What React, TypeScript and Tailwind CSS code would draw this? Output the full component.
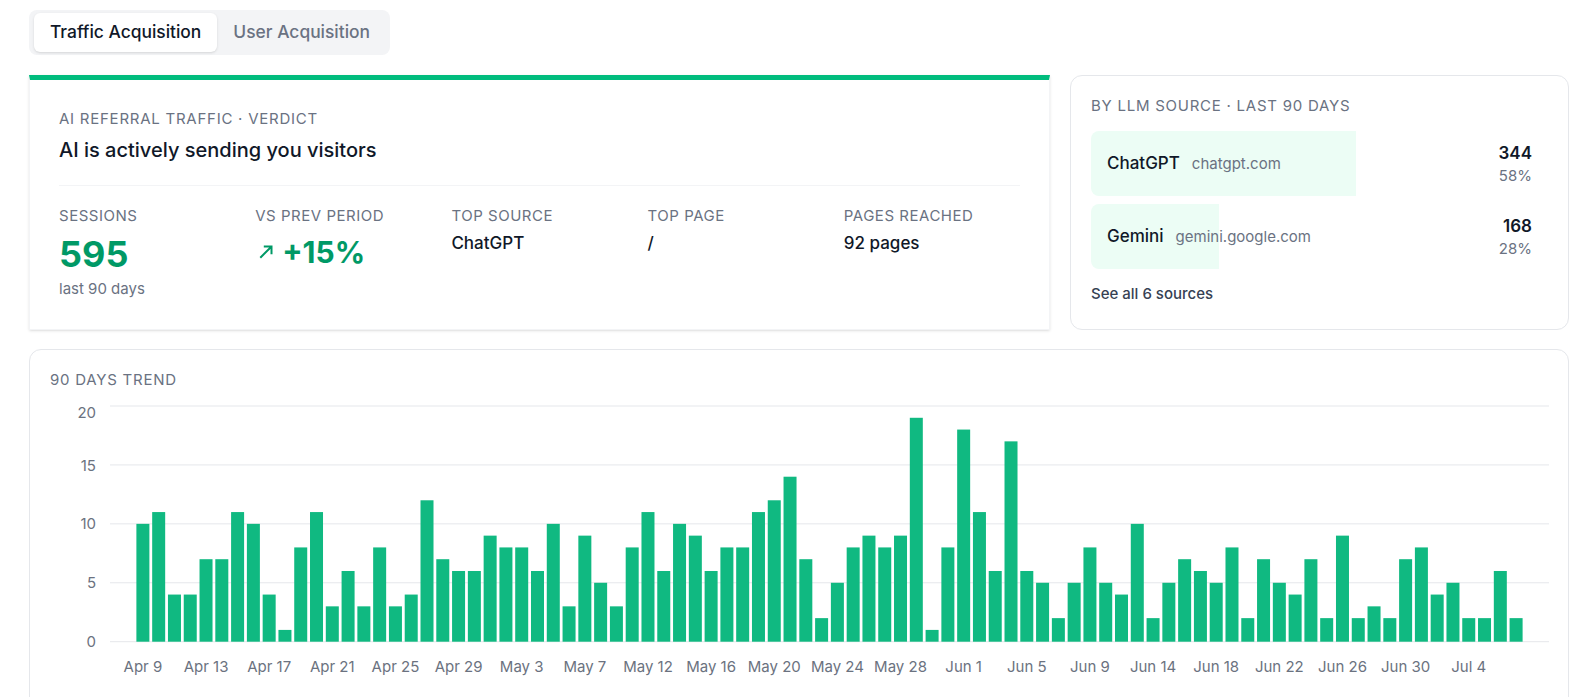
const trend = [
  10, 11, 4, 4, 7, 7, 11, 10, 4, 1, 8, 11, 3, 6, 3, 8, 3, 4, 12, 7, 6, 6, 9, 8, 8, 6, 10, 3, 9, 5, 3, 8, 11, 6, 10, 9, 6, 8,
  8, 11, 12, 14, 7, 2, 5, 8, 9, 8, 9, 19, 1, 8, 18, 11, 6, 17, 6, 5, 2, 5, 8, 5, 4, 10, 2, 5, 7, 6, 5, 8, 2, 7, 5, 4, 7, 2,
  9, 2, 3, 2, 7, 8, 4, 5, 2, 2, 6, 2,
]

const ticks = [
  'Apr 9', 'Apr 13', 'Apr 17', 'Apr 21', 'Apr 25', 'Apr 29', 'May 3', 'May 7', 'May 12', 'May 16', 'May 20',
  'May 24', 'May 28', 'Jun 1', 'Jun 5', 'Jun 9', 'Jun 14', 'Jun 18', 'Jun 22', 'Jun 26', 'Jun 30', 'Jul 4',
]

const sources = [
  { name: 'ChatGPT', host: 'chatgpt.com', count: 344, share: 58 },
  { name: 'Gemini', host: 'gemini.google.com', count: 168, share: 28 },
]

const Label = ({ children, tight }: { children: React.ReactNode; tight?: boolean }) => (
  <div className={`text-[15px] leading-5 uppercase text-gray-500 ${tight ? 'tracking-[0.035em]' : 'tracking-wider'}`}>
    {children}
  </div>
)

const TrendChart = () => {
  const base = 246.7
  const unit = 11.785
  const bandStart = 85
  const band = 15.784
  const barW = 13

  return (
    <svg width={1498} height={300} className="mt-[5px] block overflow-visible">
      {[0, 5, 10, 15, 20].map((v) => {
        const y = base - v * unit
        return (
          <g key={v}>
            <line x1={60} x2={1499} y1={y} y2={y} stroke="#e5e7eb" strokeWidth={1} />
            <text x={46} y={v === 20 ? y + 11.6 : y + 5.6} textAnchor="end" fontSize={15} fill="#6b7280">
              {v}
            </text>
          </g>
        )
      })}
      {trend.map((v, i) => (
        <rect
          key={i}
          x={bandStart + i * band + (band - barW) / 2}
          y={base - v * unit}
          width={barW}
          height={v * unit}
          fill="#10b981"
        />
      ))}
      {ticks.map((t, k) => (
        <text
          key={t}
          x={bandStart + k * 4 * band + band / 2}
          y={277}
          textAnchor="middle"
          fontSize={15}
          fill="#6b7280"
        >
          {t}
        </text>
      ))}
    </svg>
  )
}

const UpRight = () => (
  <svg width="14" height="14" viewBox="0 0 14 14" fill="none" className="ml-[4px] text-emerald-600">
    <path d="M1.3 12.7 L12.5 1.5 M4.8 1.5 H12.5 V9.2" stroke="currentColor" strokeWidth="2" />
  </svg>
)

export default function App() {
  return (
    <div className="min-h-screen bg-white pt-[10px] pl-[29px] pr-[18px] font-['Inter',sans-serif] text-gray-900">
      <div className="inline-flex rounded-lg bg-gray-100 py-[3px] pl-[5px] pr-[4px]">
        <button className="h-[39px] rounded-md bg-white px-4 text-[17.4px] font-medium text-gray-900 shadow-sm">
          Traffic Acquisition
        </button>
        <button className="h-[39px] rounded-md px-4 text-[17.4px] font-medium text-gray-500">User Acquisition</button>
      </div>

      <div className="mt-5 grid grid-cols-[1fr_499px] gap-5">
        <div className="border border-gray-100 border-t-[5px] border-t-emerald-500 bg-white px-[29px] pt-[29px] pb-[30px] shadow-sm">
          <Label>AI referral traffic · verdict</Label>
          <div className="mt-[7px] text-[20px] leading-7 font-medium text-gray-900">
            AI is actively sending you visitors
          </div>
          <div className="mt-[21px] grid grid-cols-5 gap-5 border-t border-gray-100 pt-5">
            <div>
              <Label tight>Sessions</Label>
              <div className="mt-2 text-[36px] leading-10 font-bold text-emerald-600">595</div>
              <div className="mt-[5px] text-[15px] leading-5 text-gray-500">last 90 days</div>
            </div>
            <div>
              <Label tight>vs prev period</Label>
              <div className="mt-2 flex h-9 items-center gap-[9px]">
                <UpRight />
                <span className="text-[30px] leading-9 font-bold text-emerald-600">+15%</span>
              </div>
            </div>
            <div>
              <Label tight>Top source</Label>
              <div className="mt-[5px] text-[17px] leading-6 font-medium">ChatGPT</div>
            </div>
            <div>
              <Label tight>Top page</Label>
              <div className="mt-[5px] text-[17px] leading-6 font-medium">/</div>
            </div>
            <div>
              <Label tight>Pages reached</Label>
              <div className="mt-[5px] text-[17px] leading-6 font-medium">92 pages</div>
            </div>
          </div>
        </div>

        <div className="rounded-xl border border-gray-200 bg-white p-5">
          <Label>By LLM source · last 90 days</Label>
          <div className="mt-[15px] flex flex-col gap-2">
            {sources.map((s) => (
              <div key={s.name} className="relative h-[65px] overflow-hidden rounded-lg">
                <div className="absolute inset-y-0 left-0 bg-emerald-50" style={{ width: `${s.share}%` }} />
                <div className="relative flex h-full items-center justify-between px-4">
                  <div className="flex items-baseline gap-3">
                    <span className="text-[17px] font-medium text-gray-900">{s.name}</span>
                    <span className="text-[15px] text-gray-500">{s.host}</span>
                  </div>
                  <div className="text-right">
                    <div className="text-[17px] leading-[22px] font-semibold text-gray-900">{s.count}</div>
                    <div className="mt-[2px] text-[15px] leading-5 text-gray-500">{s.share}%</div>
                  </div>
                </div>
              </div>
            ))}
          </div>
          <div className="mt-[15px] text-[15px] leading-5 font-medium text-gray-700">See all 6 sources</div>
        </div>
      </div>

      <div className="mt-[19px] rounded-xl border border-gray-200 bg-white px-5 pt-5 pb-5">
        <Label>90 days trend</Label>
        <TrendChart />
      </div>
    </div>
  )
}
